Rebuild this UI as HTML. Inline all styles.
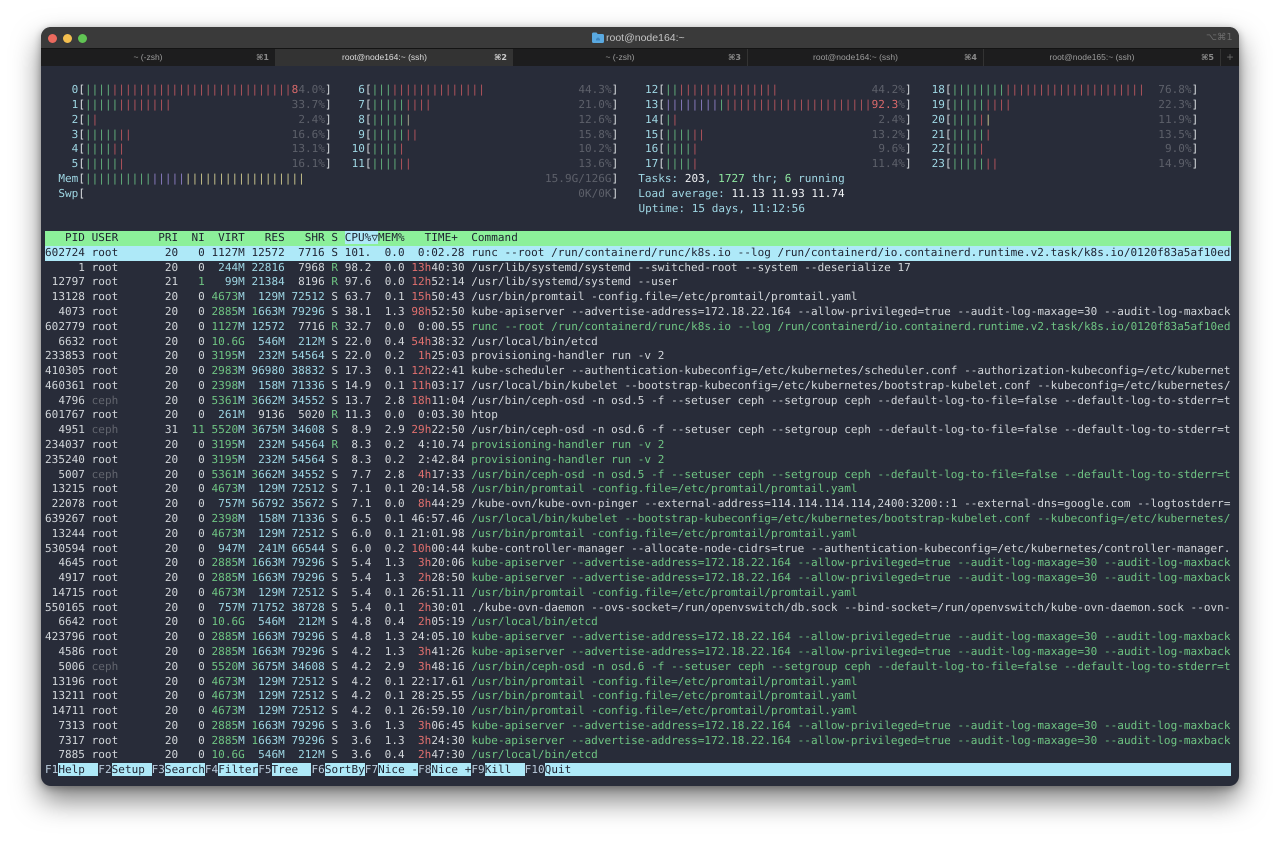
<!DOCTYPE html>
<html><head><meta charset="utf-8"><title>root@node164:~</title>
<style>
html,body{margin:0;padding:0;width:1280px;height:841px;background:#fff;overflow:hidden}
#w{position:absolute;left:41px;top:27px;width:1198px;height:759px;border-radius:10px;background:#282c39;box-shadow:0 14px 28px rgba(0,0,0,.5),0 2px 8px rgba(0,0,0,.3);overflow:hidden}
#tb{position:absolute;left:0;top:0;width:100%;height:21px;background:#3a3a3a}
.dot{position:absolute;top:7px;width:9px;height:9px;border-radius:50%}
#title{position:absolute;left:565px;top:4px;font:10.5px/14px "Liberation Sans",sans-serif;color:#c4c4c4;white-space:pre;filter:blur(.25px)}
#kb{position:absolute;left:1165px;top:4px;font:9.5px/14px "DejaVu Sans",sans-serif;color:#6d6d6d}
#tabs{position:absolute;left:0;top:21px;width:100%;height:18px;background:#1d1d1e;border-top:1px solid #141414;box-sizing:border-box;filter:blur(.25px)}
.t{position:absolute;top:0;height:17px;padding-right:20px;font:8.5px/17px "Liberation Sans",sans-serif;color:#9c9c9c;text-align:center;border-right:1px solid #333;box-sizing:border-box}
.t span{position:absolute;right:6px;top:0;font:bold 8px/17px "DejaVu Sans",sans-serif;color:#8a8a8a}
.t.a{background:#333;color:#ddd;border:0}.t.a span{color:#ccc}
#term{position:absolute;left:4px;top:56.3px;width:1186px;font:11px "DejaVu Sans Mono","Liberation Mono",monospace;letter-spacing:.037px;text-rendering:geometricPrecision;color:#d3d7db;filter:blur(.3px)}
.l{height:14.79px;line-height:14.79px;white-space:pre;overflow:hidden;width:1186px}
.l b{font-weight:normal;color:#6fc583}
.l i{font-style:normal;color:#9fd7e4}
.l u{text-decoration:none;color:#e2706f}
.l s{text-decoration:none;color:#62656e}
.l em{font-style:normal}
.m b{color:#62b07c}.m u{color:#b3545c}
.m .p{color:#8a7cc0}.m .y{color:#c8c48c}.m .k{color:#a5a58c}
.in{display:inline-block;position:relative;width:240px;height:14px;vertical-align:top}
.in em{position:absolute;right:0;top:0;color:#5d606a}
.in em.r{color:#d9696b}
.in em.r small{font-size:inherit;color:#5d606a}
.br{color:#d9dde0}
.v{color:#f0f2f4}
.gv{color:#8fe8a0}
.h{background:#8cf09a;color:#1e2230}
.h span{background:#aee9f8}
.sel{background:#aee9f8;color:#1e2230}
.f span{background:#aee9f8;color:#1e2230}
.f{color:#bcd;}
</style></head><body>
<div id="w">
<div id="tb">
<div class="dot" style="left:6.5px;background:#ec6a5e"></div>
<div class="dot" style="left:21.5px;background:#f4bf4f"></div>
<div class="dot" style="left:36.5px;background:#61c554"></div>
<svg style="position:absolute;left:551px;top:5px" width="12" height="11" viewBox="0 0 12 11"><path d="M0 2q0-1.500 1.500-1.500h3l1.200 1.500h4.800q1.500 0 1.500 1.500v6q0 1.500-1.500 1.500h-9q-1.500 0-1.500-1.500z" fill="#5aa9e0"/><path d="M4 7l2-1.700 2 1.700v1.500h-4z" fill="#3d85c0"/></svg>
<div id="title">root@node164:~</div>
<div id="kb">⌥⌘1</div>
</div>
<div id="tabs">
<div class="t" style="left:0;width:235px">~ (-zsh)<span>⌘1</span></div>
<div class="t a" style="left:235px;width:237px">root@node164:~ (ssh)<span>⌘2</span></div>
<div class="t" style="left:472px;width:235px">~ (-zsh)<span>⌘3</span></div>
<div class="t" style="left:707px;width:236px">root@node164:~ (ssh)<span>⌘4</span></div>
<div class="t" style="left:943px;width:237px">root@node165:~ (ssh)<span>⌘5</span></div>
<div class="t" style="left:1180px;width:18px;padding:0;border:0;font-size:12px;color:#666">+</div>
</div>
<div id="term">
<div class="l m"><i>    0</i><span class="br">[</span><span class="in"><b>||||</b><u>|||||||||||||||||||||||||||</u><em class="r" style="color:#5d606a"><u style="color:#d9696b">8</u>4.0%</em></span><span class="br">]</span><i>    6</i><span class="br">[</span><span class="in"><b>|||</b><u>||||||||||||||</u><em>44.3%</em></span><span class="br">]</span><i>    12</i><span class="br">[</span><span class="in"><b>||</b><u>|||||||||||||||</u><em>44.2%</em></span><span class="br">]</span><i>   18</i><span class="br">[</span><span class="in"><b>||||||||</b><u>|||||||||||||||||||||</u><em>76.8%</em></span><span class="br">]</span></div>
<div class="l m"><i>    1</i><span class="br">[</span><span class="in"><b>|||||</b><u>||||||||</u><em>33.7%</em></span><span class="br">]</span><i>    7</i><span class="br">[</span><span class="in"><b>|||||</b><u>||||</u><em>21.0%</em></span><span class="br">]</span><i>    13</i><span class="br">[</span><span class="in"><span class="p">||||||||</span><b>|</b><u>||||||||||||||||||||||</u><em class="r">92.3<small>%</small></em></span><span class="br">]</span><i>   19</i><span class="br">[</span><span class="in"><b>|||||</b><u>||||</u><em>22.3%</em></span><span class="br">]</span></div>
<div class="l m"><i>    2</i><span class="br">[</span><span class="in"><b>|</b><u>|</u><em>2.4%</em></span><span class="br">]</span><i>    8</i><span class="br">[</span><span class="in"><b>|||||</b><span class="k">|</span><em>12.6%</em></span><span class="br">]</span><i>    14</i><span class="br">[</span><span class="in"><b>|</b><u>|</u><em>2.4%</em></span><span class="br">]</span><i>   20</i><span class="br">[</span><span class="in"><b>||||</b><u>|</u><span class="y">|</span><em>11.9%</em></span><span class="br">]</span></div>
<div class="l m"><i>    3</i><span class="br">[</span><span class="in"><b>|||||</b><u>||</u><em>16.6%</em></span><span class="br">]</span><i>    9</i><span class="br">[</span><span class="in"><b>|||||</b><u>||</u><em>15.8%</em></span><span class="br">]</span><i>    15</i><span class="br">[</span><span class="in"><b>||||</b><u>||</u><em>13.2%</em></span><span class="br">]</span><i>   21</i><span class="br">[</span><span class="in"><b>|||||</b><u>|</u><em>13.5%</em></span><span class="br">]</span></div>
<div class="l m"><i>    4</i><span class="br">[</span><span class="in"><b>||||</b><u>||</u><em>13.1%</em></span><span class="br">]</span><i>   10</i><span class="br">[</span><span class="in"><b>||||</b><u>|</u><em>10.2%</em></span><span class="br">]</span><i>    16</i><span class="br">[</span><span class="in"><b>||||</b><u>|</u><em>9.6%</em></span><span class="br">]</span><i>   22</i><span class="br">[</span><span class="in"><b>||||</b><u>|</u><em>9.0%</em></span><span class="br">]</span></div>
<div class="l m"><i>    5</i><span class="br">[</span><span class="in"><b>|||||</b><u>|</u><em>16.1%</em></span><span class="br">]</span><i>   11</i><span class="br">[</span><span class="in"><b>||||</b><u>||</u><em>13.6%</em></span><span class="br">]</span><i>    17</i><span class="br">[</span><span class="in"><b>||||</b><u>|</u><em>11.4%</em></span><span class="br">]</span><i>   23</i><span class="br">[</span><span class="in"><b>|||||</b><u>||</u><em>14.9%</em></span><span class="br">]</span></div>
<div class="l m"><i>  Mem</i><span class="br">[</span><span class="in" style="width:526.6px"><b>||||||||||</b><span class="p">|||||</span><span class="y">||||||||||||||||||</span><em>15.9G/126G</em></span><span class="br">]</span><i>   Tasks: </i><span class="v">203</span><i>, </i><span class="gv">1727</span><i> thr; </i><span class="gv">6</span><i> running</i></div>
<div class="l m"><i>  Swp</i><span class="br">[</span><span class="in" style="width:526.6px">&nbsp;<em>0K/0K</em></span><span class="br">]</span><i>   Load average: </i><span class="v">11.13 11.93 11.74</span></div>
<div class="l m"><span style="margin-left:.8px">                                                                                         </span><i>Uptime: 15 days, 11:12:56</i></div>
<div class="l"> </div>
<div class="l h">   PID USER      PRI  NI  VIRT   RES   SHR S <span>CPU%▽</span>MEM%   TIME+  Command</div>
<div class="l sel">602724 root       20   0 1127M 12572  7716 S 101.  0.0  0:02.28 runc --root /run/containerd/runc/k8s.io --log /run/containerd/io.containerd.runtime.v2.task/k8s.io/0120f83a5af10ed</div>
<div class="l">     1 root       20   0  <i>244M</i> <i>22816</i>  7968 <b>R</b> 98.2  0.0 <u>13h</u>40:30 /usr/lib/systemd/systemd --switched-root --system --deserialize 17</div>
<div class="l"> 12797 root       21   <b>1</b>   <i>99M</i> <i>21384</i>  8196 <b>R</b> 97.6  0.0 <u>12h</u>52:14 /usr/lib/systemd/systemd --user</div>
<div class="l"> 13128 root       20   0 <b>4673</b><i>M</i>  <i>129M</i> <i>72512</i> S 63.7  0.1 <u>15h</u>50:43 /usr/bin/promtail -config.file=/etc/promtail/promtail.yaml</div>
<div class="l">  4073 root       20   0 <b>2885</b><i>M</i> <b>1</b><i>663M</i> <i>79296</i> S 38.1  1.3 <u>98h</u>52:50 kube-apiserver --advertise-address=172.18.22.164 --allow-privileged=true --audit-log-maxage=30 --audit-log-maxback</div>
<div class="l">602779 root       20   0 <b>1127</b><i>M</i> <i>12572</i>  7716 <b>R</b> 32.7  0.0  0:00.55 <b>runc --root /run/containerd/runc/k8s.io --log /run/containerd/io.containerd.runtime.v2.task/k8s.io/0120f83a5af10ed</b></div>
<div class="l">  6632 root       20   0 <b>10.6G</b>  <i>546M</i>  <i>212M</i> S 22.0  0.4 <u>54h</u>38:32 /usr/local/bin/etcd</div>
<div class="l">233853 root       20   0 <b>3195</b><i>M</i>  <i>232M</i> <i>54564</i> S 22.0  0.2  <u>1h</u>25:03 provisioning-handler run -v 2</div>
<div class="l">410305 root       20   0 <b>2983</b><i>M</i> <i>96980</i> <i>38832</i> S 17.3  0.1 <u>12h</u>22:41 kube-scheduler --authentication-kubeconfig=/etc/kubernetes/scheduler.conf --authorization-kubeconfig=/etc/kubernet</div>
<div class="l">460361 root       20   0 <b>2398</b><i>M</i>  <i>158M</i> <i>71336</i> S 14.9  0.1 <u>11h</u>03:17 /usr/local/bin/kubelet --bootstrap-kubeconfig=/etc/kubernetes/bootstrap-kubelet.conf --kubeconfig=/etc/kubernetes/</div>
<div class="l">  4796 <s>ceph</s>       20   0 <b>5361</b><i>M</i> <b>3</b><i>662M</i> <i>34552</i> S 13.7  2.8 <u>18h</u>11:04 /usr/bin/ceph-osd -n osd.5 -f --setuser ceph --setgroup ceph --default-log-to-file=false --default-log-to-stderr=t</div>
<div class="l">601767 root       20   0  <i>261M</i>  9136  5020 <b>R</b> 11.3  0.0  0:03.30 htop</div>
<div class="l">  4951 <s>ceph</s>       31  <b>11</b> <b>5520</b><i>M</i> <b>3</b><i>675M</i> <i>34608</i> S  8.9  2.9 <u>29h</u>22:50 /usr/bin/ceph-osd -n osd.6 -f --setuser ceph --setgroup ceph --default-log-to-file=false --default-log-to-stderr=t</div>
<div class="l">234037 root       20   0 <b>3195</b><i>M</i>  <i>232M</i> <i>54564</i> <b>R</b>  8.3  0.2  4:10.74 <b>provisioning-handler run -v 2</b></div>
<div class="l">235240 root       20   0 <b>3195</b><i>M</i>  <i>232M</i> <i>54564</i> S  8.3  0.2  2:42.84 <b>provisioning-handler run -v 2</b></div>
<div class="l">  5007 <s>ceph</s>       20   0 <b>5361</b><i>M</i> <b>3</b><i>662M</i> <i>34552</i> S  7.7  2.8  <u>4h</u>17:33 <b>/usr/bin/ceph-osd -n osd.5 -f --setuser ceph --setgroup ceph --default-log-to-file=false --default-log-to-stderr=t</b></div>
<div class="l"> 13215 root       20   0 <b>4673</b><i>M</i>  <i>129M</i> <i>72512</i> S  7.1  0.1 20:14.58 <b>/usr/bin/promtail -config.file=/etc/promtail/promtail.yaml</b></div>
<div class="l"> 22078 root       20   0  <i>757M</i> <i>56792</i> <i>35672</i> S  7.1  0.0  <u>8h</u>44:29 /kube-ovn/kube-ovn-pinger --external-address=114.114.114.114,2400:3200::1 --external-dns=google.com --logtostderr=</div>
<div class="l">639267 root       20   0 <b>2398</b><i>M</i>  <i>158M</i> <i>71336</i> S  6.5  0.1 46:57.46 <b>/usr/local/bin/kubelet --bootstrap-kubeconfig=/etc/kubernetes/bootstrap-kubelet.conf --kubeconfig=/etc/kubernetes/</b></div>
<div class="l"> 13244 root       20   0 <b>4673</b><i>M</i>  <i>129M</i> <i>72512</i> S  6.0  0.1 21:01.98 <b>/usr/bin/promtail -config.file=/etc/promtail/promtail.yaml</b></div>
<div class="l">530594 root       20   0  <i>947M</i>  <i>241M</i> <i>66544</i> S  6.0  0.2 <u>10h</u>00:44 kube-controller-manager --allocate-node-cidrs=true --authentication-kubeconfig=/etc/kubernetes/controller-manager.</div>
<div class="l">  4645 root       20   0 <b>2885</b><i>M</i> <b>1</b><i>663M</i> <i>79296</i> S  5.4  1.3  <u>3h</u>20:06 <b>kube-apiserver --advertise-address=172.18.22.164 --allow-privileged=true --audit-log-maxage=30 --audit-log-maxback</b></div>
<div class="l">  4917 root       20   0 <b>2885</b><i>M</i> <b>1</b><i>663M</i> <i>79296</i> S  5.4  1.3  <u>2h</u>28:50 <b>kube-apiserver --advertise-address=172.18.22.164 --allow-privileged=true --audit-log-maxage=30 --audit-log-maxback</b></div>
<div class="l"> 14715 root       20   0 <b>4673</b><i>M</i>  <i>129M</i> <i>72512</i> S  5.4  0.1 26:51.11 <b>/usr/bin/promtail -config.file=/etc/promtail/promtail.yaml</b></div>
<div class="l">550165 root       20   0  <i>757M</i> <i>71752</i> <i>38728</i> S  5.4  0.1  <u>2h</u>30:01 ./kube-ovn-daemon --ovs-socket=/run/openvswitch/db.sock --bind-socket=/run/openvswitch/kube-ovn-daemon.sock --ovn-</div>
<div class="l">  6642 root       20   0 <b>10.6G</b>  <i>546M</i>  <i>212M</i> S  4.8  0.4  <u>2h</u>05:19 <b>/usr/local/bin/etcd</b></div>
<div class="l">423796 root       20   0 <b>2885</b><i>M</i> <b>1</b><i>663M</i> <i>79296</i> S  4.8  1.3 24:05.10 <b>kube-apiserver --advertise-address=172.18.22.164 --allow-privileged=true --audit-log-maxage=30 --audit-log-maxback</b></div>
<div class="l">  4586 root       20   0 <b>2885</b><i>M</i> <b>1</b><i>663M</i> <i>79296</i> S  4.2  1.3  <u>3h</u>41:26 <b>kube-apiserver --advertise-address=172.18.22.164 --allow-privileged=true --audit-log-maxage=30 --audit-log-maxback</b></div>
<div class="l">  5006 <s>ceph</s>       20   0 <b>5520</b><i>M</i> <b>3</b><i>675M</i> <i>34608</i> S  4.2  2.9  <u>3h</u>48:16 <b>/usr/bin/ceph-osd -n osd.6 -f --setuser ceph --setgroup ceph --default-log-to-file=false --default-log-to-stderr=t</b></div>
<div class="l"> 13196 root       20   0 <b>4673</b><i>M</i>  <i>129M</i> <i>72512</i> S  4.2  0.1 22:17.61 <b>/usr/bin/promtail -config.file=/etc/promtail/promtail.yaml</b></div>
<div class="l"> 13211 root       20   0 <b>4673</b><i>M</i>  <i>129M</i> <i>72512</i> S  4.2  0.1 28:25.55 <b>/usr/bin/promtail -config.file=/etc/promtail/promtail.yaml</b></div>
<div class="l"> 14711 root       20   0 <b>4673</b><i>M</i>  <i>129M</i> <i>72512</i> S  4.2  0.1 26:59.10 <b>/usr/bin/promtail -config.file=/etc/promtail/promtail.yaml</b></div>
<div class="l">  7313 root       20   0 <b>2885</b><i>M</i> <b>1</b><i>663M</i> <i>79296</i> S  3.6  1.3  <u>3h</u>06:45 <b>kube-apiserver --advertise-address=172.18.22.164 --allow-privileged=true --audit-log-maxage=30 --audit-log-maxback</b></div>
<div class="l">  7317 root       20   0 <b>2885</b><i>M</i> <b>1</b><i>663M</i> <i>79296</i> S  3.6  1.3  <u>3h</u>24:30 <b>kube-apiserver --advertise-address=172.18.22.164 --allow-privileged=true --audit-log-maxage=30 --audit-log-maxback</b></div>
<div class="l">  7885 root       20   0 <b>10.6G</b>  <i>546M</i>  <i>212M</i> S  3.6  0.4  <u>2h</u>47:30 <b>/usr/local/bin/etcd</b></div>
<div class="l f">F1<span>Help  </span>F2<span>Setup </span>F3<span>Search</span>F4<span>Filter</span>F5<span>Tree  </span>F6<span>SortBy</span>F7<span>Nice -</span>F8<span>Nice +</span>F9<span>Kill  </span>F10<span>Quit                                                                                                                                       </span></div>
</div>
</div>
</body></html>
